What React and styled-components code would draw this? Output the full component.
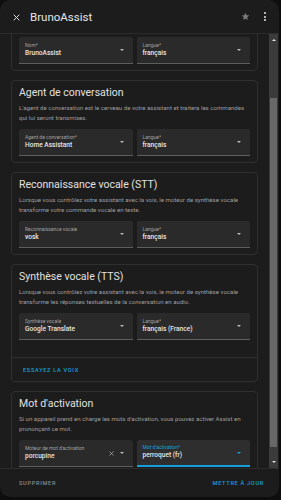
import React from "react";
import styled, { createGlobalStyle } from "styled-components";

const GlobalStyle = createGlobalStyle`
  html, body {
    margin: 0;
    padding: 0;
    background: #0e0e0e;
  }
  body {
    font-family: Roboto, "Liberation Sans", sans-serif;
    color: #e1e1e1;
  }
`;

const BLUE = "#14a0dc";

//Data
const sections = [
  {
    title: "Agent de conversation",
    desc: "L'agent de conversation est le cerveau de votre assistant et traitera les commandes qui lui seront transmises.",
    fields: [
      { label: "Agent de conversation*", value: "Home Assistant" },
      { label: "Langue*", value: "français" },
    ],
  },
  {
    title: "Reconnaissance vocale (STT)",
    desc: "Lorsque vous contrôlez votre assistant avec la voix, le moteur de synthèse vocale transforme votre commande vocale en texte.",
    fields: [
      { label: "Reconnaissance vocale", value: "vosk" },
      { label: "Langue*", value: "français" },
    ],
  },
  {
    title: "Synthèse vocale (TTS)",
    desc: "Lorsque vous contrôlez votre assistant avec la voix, le moteur de synthèse vocale transforme les réponses textuelles de la conversation en audio.",
    fields: [
      { label: "Synthèse vocale", value: "Google Translate" },
      { label: "Langue*", value: "français (France)" },
    ],
    action: "ESSAYEZ LA VOIX",
  },
  {
    title: "Mot d'activation",
    desc: "Si un appareil prend en charge les mots d'activation, vous pouvez activer Assist en prononçant ce mot.",
    fields: [
      { label: "Moteur de mot d'activation", value: "porcupine", clearable: true },
      { label: "Mot d'activation*", value: "perroquet (fr)", active: true },
    ],
  },
];

const SelectField = ({ label, value, clearable, active }) => (
  <Field $active={active}>
    <FieldText>
      <FieldLabel $active={active}>{label}</FieldLabel>
      <FieldValue>{value}</FieldValue>
    </FieldText>
    {clearable && (
      <ClearIcon viewBox="0 0 10 10">
        <path d="M1 1 L9 9 M9 1 L1 9" stroke="#c4c4c4" strokeWidth="1.3" />
      </ClearIcon>
    )}
    <Caret $active={active} />
  </Field>
);

const App = () => {
  return (
    <>
      <GlobalStyle />
      <Dialog>
        <Header>
          <HeaderIcon viewBox="0 0 10 10" width="7" height="7">
            <path d="M1 1 L9 9 M9 1 L1 9" stroke="#e6e6e6" strokeWidth="1.4" />
          </HeaderIcon>
          <Title>BrunoAssist</Title>
          <HeaderActions>
            <svg viewBox="0 0 24 24" width="9" height="9">
              <path
                fill="#7c7c7c"
                d="M12 17.27L18.18 21l-1.64-7.03L22 9.24l-7.19-.61L12 2 9.19 8.63 2 9.24l5.46 4.73L5.82 21z"
              />
            </svg>
            <Dots>
              <span />
              <span />
              <span />
            </Dots>
          </HeaderActions>
        </Header>

        <Body>
          <Content>
            <Scroller>
              <Card $first>
                <FieldRow $flush>
                  <SelectField label="Nom*" value="BrunoAssist" />
                  <SelectField label="Langue*" value="français" />
                </FieldRow>
              </Card>
              {sections.map((s) => (
                <Card key={s.title}>
                  <CardContent $extra={!!s.action}>
                    <CardTitle>{s.title}</CardTitle>
                    <CardDesc>{s.desc}</CardDesc>
                    <FieldRow>
                      {s.fields.map((f) => (
                        <SelectField key={f.label} {...f} />
                      ))}
                    </FieldRow>
                  </CardContent>
                  {s.action && (
                    <CardActions>
                      <TextButton $color={BLUE}>{s.action}</TextButton>
                    </CardActions>
                  )}
                </Card>
              ))}
            </Scroller>
          </Content>
          <Scrollbar>
            <ArrowBox>
              <Arrow $up />
            </ArrowBox>
            <Track>
              <Thumb $top={52} $height={349} />
            </Track>
            <ArrowBox>
              <Arrow />
            </ArrowBox>
          </Scrollbar>
        </Body>

        <Footer>
          <TextButton $color="#8a8a8a">SUPPRIMER</TextButton>
          <TextButton $color={BLUE}>METTRE À JOUR</TextButton>
        </Footer>
      </Dialog>
    </>
  );
};

const Dialog = styled.div`
  width: 279px;
  height: 497px;
  background: #1c1c1c;
  border-radius: 10px;
  display: flex;
  flex-direction: column;
  overflow: hidden;
`;

const Header = styled.div`
  height: 33px;
  flex-shrink: 0;
  display: flex;
  align-items: center;
  padding: 0 13px 0 13px;
  border-bottom: 1px solid #2b2b2b;
`;

const HeaderIcon = styled.svg`
  flex-shrink: 0;
  margin-top: 1px;
`;

const Title = styled.div`
  margin-left: 10px;
  font-size: 11.5px;
  font-weight: 400;
  color: #e6e6e6;
  flex: 1;
`;

const HeaderActions = styled.div`
  display: flex;
  align-items: center;
  gap: 14px;
`;

const Dots = styled.div`
  display: flex;
  flex-direction: column;
  gap: 1.5px;
  span {
    width: 2px;
    height: 2px;
    border-radius: 50%;
    background: #e6e6e6;
  }
`;

const Body = styled.div`
  flex: 1;
  min-height: 0;
  display: flex;
`;

const Content = styled.div`
  flex: 1;
  overflow: hidden;
`;

const Scroller = styled.div`
  margin-top: -7px;
  display: flex;
  flex-direction: column;
  gap: 9px;
  padding: 0 11px;
`;

const Card = styled.div`
  background: #1c1c1c;
  border: 1px solid #2f2f2f;
  border-radius: 4px;
  padding: ${(p) => (p.$first ? "9px 7px 6px" : "0")};
`;

const CardContent = styled.div`
  padding: 5px 7px ${(p) => (p.$extra ? "17px" : "6px")};
`;

const CardTitle = styled.div`
  font-size: 10.5px;
  line-height: 13px;
  color: #e1e1e1;
`;

const CardDesc = styled.div`
  margin-top: 4px;
  font-size: 6.1px;
  line-height: 10px;
  color: #9e9e9e;
`;

const FieldRow = styled.div`
  display: grid;
  grid-template-columns: 1fr 1fr;
  gap: 4px;
  margin-top: ${(p) => (p.$flush ? "0" : "6px")};
`;

const Field = styled.div`
  height: 27px;
  box-sizing: border-box;
  display: flex;
  align-items: center;
  padding: 0 8px 0 6px;
  background: ${(p) => (p.$active ? "#2e2e2e" : "#2a2a2a")};
  border-radius: 2px 2px 0 0;
  border-bottom: ${(p) => (p.$active ? `2px solid ${BLUE}` : "1px solid #5e5e5e")};
`;

const FieldText = styled.div`
  flex: 1;
  min-width: 0;
  display: flex;
  flex-direction: column;
  margin-top: -1px;
`;

const FieldLabel = styled.div`
  font-size: 5px;
  line-height: 7px;
  color: ${(p) => (p.$active ? BLUE : "#a0a0a0")};
  white-space: nowrap;
`;

const FieldValue = styled.div`
  font-size: 6.6px;
  line-height: 9px;
  font-weight: 500;
  color: #e6e6e6;
  white-space: nowrap;
`;

const ClearIcon = styled.svg`
  width: 5px;
  height: 5px;
  margin-right: 6px;
`;

const Caret = styled.div`
  width: 0;
  height: 0;
  border-left: 2.5px solid transparent;
  border-right: 2.5px solid transparent;
  border-top: 2.5px solid ${(p) => (p.$active ? BLUE : "#bdbdbd")};
  margin-right: 1px;
`;

const CardActions = styled.div`
  border-top: 1px solid #2f2f2f;
  height: 23px;
  display: flex;
  align-items: center;
  padding: 0 11px;
`;

const TextButton = styled.div`
  font-size: 5.6px;
  font-weight: 500;
  letter-spacing: 0.7px;
  color: ${(p) => p.$color};
`;

const Scrollbar = styled.div`
  width: 9px;
  margin-right: 1px;
  display: flex;
  flex-direction: column;
  background: #3b3b3b;
`;

const ArrowBox = styled.div`
  height: 12px;
  display: flex;
  align-items: center;
  justify-content: center;
`;

const Arrow = styled.div`
  width: 0;
  height: 0;
  border-left: 2.5px solid transparent;
  border-right: 2.5px solid transparent;
  ${(p) =>
    p.$up
      ? "border-bottom: 2.5px solid #e0e0e0;"
      : "border-top: 2.5px solid #e0e0e0;"}
`;

const Track = styled.div`
  flex: 1;
  padding: 0 1px;
`;

const Thumb = styled.div`
  margin-top: ${(p) => p.$top}px;
  height: ${(p) => p.$height}px;
  background: #686868;
`;

const Footer = styled.div`
  height: 28px;
  flex-shrink: 0;
  border-top: 1px solid #2b2b2b;
  display: flex;
  align-items: center;
  justify-content: space-between;
  padding: 0 15px 0 19px;
`;

export default App;
